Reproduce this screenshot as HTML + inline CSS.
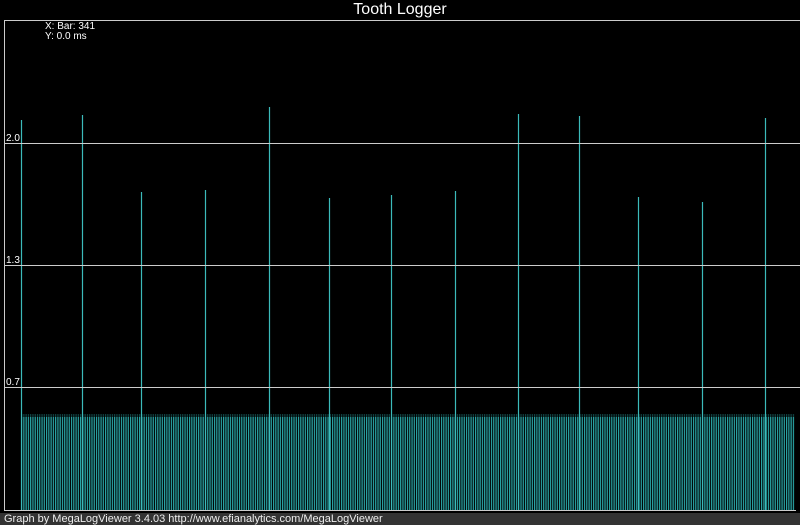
<!DOCTYPE html>
<html><head><meta charset="utf-8"><style>
html,body{margin:0;padding:0;background:#000;width:800px;height:525px;overflow:hidden;font-family:"Liberation Sans",sans-serif}
.t{position:absolute;left:0;width:800px;top:1px;text-align:center;color:#fff;font-size:16px}
.f{position:absolute;left:0;top:513px;width:800px;height:12px;background:#333;color:#eee;font-size:11px;line-height:12px;padding-left:4px;box-sizing:border-box}
.l{position:absolute;color:#fff;font-size:10px}
</style></head><body>
<svg width="800" height="525" style="position:absolute;left:0;top:0">
<defs><pattern id="b" x="21" y="0" width="2.27" height="525" patternUnits="userSpaceOnUse"><rect x="0" y="0" width="1.2" height="525" fill="#2aa8a8"/></pattern></defs>
<rect x="21" y="417" width="774" height="93" fill="url(#b)"/>
<rect x="21" y="414" width="774" height="3" fill="url(#b)" opacity="0.4"/>
<g stroke="#3bbaba" stroke-width="1.2">
<line x1="21.5" y1="120" x2="21.5" y2="510"/><line x1="82.5" y1="115" x2="82.5" y2="510"/>
<line x1="141.5" y1="192" x2="141.5" y2="510"/><line x1="205.5" y1="190" x2="205.5" y2="510"/>
<line x1="269.5" y1="107" x2="269.5" y2="510"/><line x1="329.5" y1="198" x2="329.5" y2="510"/>
<line x1="391.5" y1="195" x2="391.5" y2="510"/><line x1="455.5" y1="191" x2="455.5" y2="510"/>
<line x1="518.5" y1="114" x2="518.5" y2="510"/><line x1="579.5" y1="116" x2="579.5" y2="510"/>
<line x1="638.5" y1="197" x2="638.5" y2="510"/><line x1="702.5" y1="202" x2="702.5" y2="510"/>
<line x1="765.5" y1="118" x2="765.5" y2="510"/>
</g>
<g stroke="#ccc" stroke-width="1">
<line x1="4" y1="20.5" x2="800" y2="20.5"/><line x1="4.5" y1="20" x2="4.5" y2="511"/>
<line x1="4" y1="510.5" x2="796" y2="510.5"/>
<line x1="4" y1="143.5" x2="800" y2="143.5"/><line x1="4" y1="265.5" x2="800" y2="265.5"/><line x1="4" y1="387.5" x2="800" y2="387.5"/>
</g>
</svg>
<div class="t">Tooth Logger</div>
<div class="l" style="left:45px;top:21px">X: Bar: 341</div>
<div class="l" style="left:45px;top:31px">Y: 0.0 ms</div>
<div class="l" style="left:6px;top:133px">2.0</div>
<div class="l" style="left:6px;top:255px">1.3</div>
<div class="l" style="left:6px;top:377px">0.7</div>
<div class="f">Graph by MegaLogViewer 3.4.03 http://www.efianalytics.com/MegaLogViewer</div>
</body></html>
